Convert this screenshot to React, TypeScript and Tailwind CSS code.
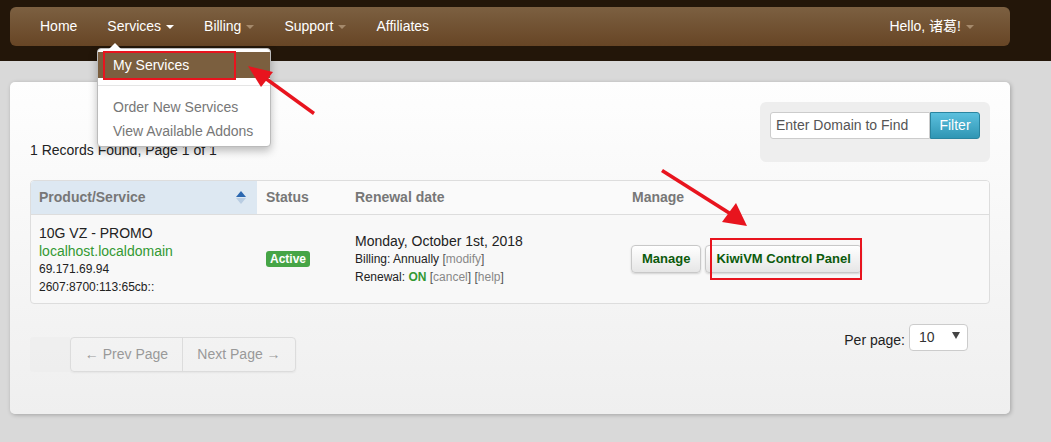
import React from 'react';

const font = { fontFamily: '"Liberation Sans", Arial, "Noto Sans CJK SC", sans-serif' };

function Caret({ light }: { light?: boolean }) {
    return (
        <span
            className={`inline-block ml-[5px] w-0 h-0 border-x-[4px] border-x-transparent border-t-[4px] align-middle ${light ? 'border-t-white' : 'border-t-[#a58a6c]'}`}
        />
    );
}

function Btn({ children }: { children: React.ReactNode }) {
    return (
        <div className="h-[28px] px-[10px] flex items-center rounded-[4px] border border-[#c8c8c8] bg-gradient-to-b from-white to-[#e6e6e6] shadow-[0_1px_2px_rgba(0,0,0,0.15)] text-[13px] font-bold text-[#0b5a0b]">
            {children}
        </div>
    );
}

export default function App() {
    const nav = [
        { label: 'Home' },
        { label: 'Services', caret: 'light' },
        { label: 'Billing', caret: 'dim' },
        { label: 'Support', caret: 'dim' },
        { label: 'Affiliates' },
    ];

    return (
        <div style={font} className="relative w-[1051px] h-[442px] overflow-hidden bg-[#d9d9d9] text-[#333]">
            {/* top bar */}
            <div className="h-[61px] bg-[#231609] pt-[7px] px-[10px] w-full">
                <div className="w-[1000px] h-[39px] rounded-[6px] bg-gradient-to-b from-[#7c6041] to-[#674525] flex items-center justify-between pl-[15px] pr-[36px]">
                    <div className="flex items-center">
                        {nav.map((n) => (
                            <div key={n.label} className="px-[15px] text-[14px] text-white flex items-center">
                                {n.label}
                                {n.caret && <Caret light={n.caret === 'light'} />}
                            </div>
                        ))}
                    </div>
                    <div className="text-[14px] text-white flex items-center">
                        Hello, 诸葛!
                        <Caret />
                    </div>
                </div>
            </div>

            {/* panel */}
            <div className="mt-[21px] ml-[10px] w-[1000px] rounded-[5px] bg-gradient-to-b from-[#fefefe] to-[#efefef] shadow-[1px_1px_4px_rgba(0,0,0,0.25)] px-[20px] pt-[20px] pb-[42px]">
                <div className="flex justify-between items-end">
                    <div className="text-[14px] leading-[20px] mb-[2px] text-[#222]">1 Records Found, Page 1 of 1</div>
                    <div className="w-[230px] h-[60px] bg-[#eeeeee] rounded-[6px] p-[10px] flex items-start">
                        <div className="w-[160px] h-[27px] bg-white border border-[#ccc] rounded-l-[3px] flex items-center pl-[5px] text-[14px] text-[#555]">
                            Enter Domain to Find
                        </div>
                        <div className="w-[50px] h-[27px] rounded-r-[3px] bg-gradient-to-b from-[#5bc0de] to-[#2f96b4] border border-[#2a85a0] flex items-center justify-center text-[14px] text-white">
                            Filter
                        </div>
                    </div>
                </div>

                {/* table */}
                <div className="mt-[18px] border border-[#ddd] rounded-[4px] overflow-hidden bg-[#f8f8f8]">
                    <div className="flex h-[34px] border-b border-[#ddd] text-[14px] font-bold text-[#777] bg-[#fafafa]">
                        <div className="w-[226px] bg-[#dde8f2] flex items-center justify-between pl-[8px] pr-[11px]">
                            Product/Service
                            <span className="flex flex-col items-center gap-[1px]">
                                <span className="w-0 h-0 border-x-[5px] border-x-transparent border-b-[6px] border-b-[#2c68b0]" />
                                <span className="w-0 h-0 border-x-[5px] border-x-transparent border-t-[6px] border-t-[#b9cde2]" />
                            </span>
                        </div>
                        <div className="w-[89px] flex items-center pl-[9px]">Status</div>
                        <div className="w-[277px] flex items-center pl-[9px]">Renewal date</div>
                        <div className="flex-1 flex items-center pl-[9px]">Manage</div>
                    </div>
                    <div className="flex h-[88px]">
                        <div className="w-[226px] pl-[8px] pt-[9px] text-[#222]">
                            <div className="text-[14px] leading-[18px]">10G VZ - PROMO</div>
                            <div className="text-[14px] leading-[18px] text-[#339933]">localhost.localdomain</div>
                            <div className="text-[12px] leading-[18px]">69.171.69.94</div>
                            <div className="text-[12px] leading-[18px]">2607:8700:113:65cb::</div>
                        </div>
                        <div className="w-[89px] pl-[9px] flex items-center">
                            <span className="h-[16px] px-[4px] rounded-[3px] bg-[#46a546] text-white text-[12px] font-bold flex items-center">Active</span>
                        </div>
                        <div className="w-[277px] pl-[9px] flex flex-col justify-center text-[#222]">
                            <div className="text-[14px] leading-[18px]">Monday, October 1st, 2018</div>
                            <div className="text-[12px] leading-[18px]">
                                Billing: Annually <span className="text-[#555]">[</span><span className="text-[#888]">modify</span><span className="text-[#555]">]</span>
                            </div>
                            <div className="text-[12px] leading-[18px]">
                                Renewal: <span className="font-bold text-[#339933]">ON</span>{' '}
                                <span className="text-[#555]">[</span><span className="text-[#888]">cancel</span><span className="text-[#555]">]</span>{' '}
                                <span className="text-[#555]">[</span><span className="text-[#888]">help</span><span className="text-[#555]">]</span>
                            </div>
                        </div>
                        <div className="flex-1 pl-[8px] flex items-center gap-[4px]">
                            <Btn>Manage</Btn>
                            <Btn>KiwiVM Control Panel</Btn>
                        </div>
                    </div>
                </div>

                {/* pagination */}
                <div className="mt-[19px] flex justify-between items-start">
                    <div className="mt-[14px] flex h-[35px] text-[14px] text-[#999]">
                        <div className="w-[40px] bg-[#ececec] rounded-l-[4px] opacity-60" />
                        <div className="flex border border-[#dcdcdc] rounded-[4px] shadow-[0_1px_2px_rgba(0,0,0,0.05)]">
                            <div className="w-[112px] flex items-center justify-center border-r border-[#dcdcdc]">← Prev Page</div>
                            <div className="w-[112px] flex items-center justify-center">Next Page →</div>
                        </div>
                    </div>
                    <div className="flex items-center mr-[22px] text-[14px] text-[#222]">
                        <span className="mt-[7px] mr-[4px]">Per page:</span>
                        <div className="w-[59px] h-[27px] bg-white border border-[#ccc] rounded-[4px] flex items-center justify-between pl-[9px] pr-[7px]">
                            <span className="text-[#333]">10</span>
                            <span className="w-0 h-0 border-x-[4px] border-x-transparent border-t-[7px] border-t-[#444] mb-[3px]" />
                        </div>
                    </div>
                </div>
            </div>

            {/* open Services menu */}
            <div className="absolute left-[97px] top-[48px] w-[174px] h-[99px] bg-white border border-[#bbb] rounded-[4px] shadow-[0_4px_8px_rgba(0,0,0,0.25)] pt-[3px] text-[14px]">
                <div className="absolute -top-[6px] left-[11px] w-0 h-0 border-x-[6px] border-x-transparent border-b-[6px] border-b-white" />
                <div className="h-[26px] bg-[#7b5f3f] text-white flex items-center pl-[15px]">My Services</div>
                <div className="mt-[7px] h-px bg-[#e5e5e5]" />
                <div className="mt-[9px] h-[24px] flex items-center pl-[15px] text-[#777]">Order New Services</div>
                <div className="h-[24px] flex items-center pl-[15px] text-[#777]">View Available Addons</div>
            </div>

            {/* annotations */}
            <svg className="absolute left-0 top-0 pointer-events-none" width="1051" height="442">
                <rect x="104" y="52" width="131" height="27" fill="none" stroke="#e8141e" strokeWidth="2" />
                <rect x="711" y="239" width="150" height="40" fill="none" stroke="#e8141e" strokeWidth="2" />
                <polygon points="315,112 264,75 262,78 313,115" fill="#e8141e" />
                <polygon points="248,66 273,72 261,87" fill="#e8141e" />
                <polygon points="663,169 731,212 729,215 661,172" fill="#e8141e" />
                <polygon points="747,226 722,222 736,203" fill="#e8141e" />
            </svg>
        </div>
    );
}
